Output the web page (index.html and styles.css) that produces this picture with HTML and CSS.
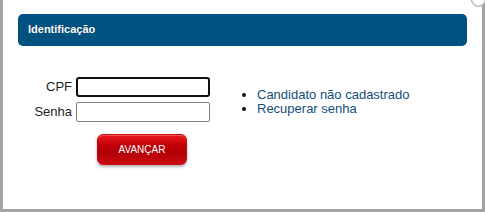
FILE: index.html
```html
<!DOCTYPE html>
<html lang="pt-BR">
<head>
<meta charset="utf-8">
<title>Identificação</title>
<link rel="stylesheet" href="styles.css">
</head>
<body>
<div class="dialog">
  <span class="close"></span>
  <div class="header">Identificação</div>
  <div class="content">
    <form class="login">
      <label class="lbl" for="cpf">CPF</label>
      <input class="field field-active" id="cpf" type="text">
      <label class="lbl" for="senha">Senha</label>
      <input class="field" id="senha" type="password">
      <span></span>
      <button class="btn" type="button">AVANÇAR</button>
    </form>
    <ul class="links">
      <li><a href="#">Candidato não cadastrado</a></li>
      <li><a href="#">Recuperar senha</a></li>
    </ul>
  </div>
</div>
</body>
</html>
```

FILE: styles.css
```css
html, body {
  margin: 0;
  padding: 0;
  background: #ffffff;
  overflow: hidden;
}

.dialog {
  position: relative;
  box-sizing: border-box;
  width: 485px;
  height: 212px;
  background: #ffffff;
  border-left: 3px solid #a4a4a4;
  border-right: 3px solid #a4a4a4;
  border-bottom: 3px solid #a4a4a4;
  padding-top: 14px;
  font-family: "Liberation Sans", Arial, sans-serif;
}

.close {
  position: absolute;
  top: -8px;
  right: -4px;
  width: 13px;
  height: 13px;
  border-radius: 50%;
  border: 1px solid #9c9c9c;
  background: radial-gradient(circle at 50% 40%, #ffffff 45%, #d8d8d8 100%);
}

.header {
  margin: 0 15px;
  height: 32px;
  line-height: 31px;
  padding-left: 10px;
  background: #005280;
  border-radius: 5px;
  color: #ffffff;
  font-size: 11px;
  font-weight: bold;
  text-shadow: 0 0 1px rgba(0, 0, 0, 0.4);
}

.content {
  display: flex;
  align-items: flex-start;
  margin-top: 31px;
  padding-left: 19px;
}

.login {
  display: grid;
  grid-template-columns: 50px 134px;
  column-gap: 4px;
  row-gap: 5px;
  margin: 0;
}

.lbl {
  text-align: right;
  font-size: 13px;
  line-height: 20px;
  color: #1e1e1e;
}

.field {
  box-sizing: border-box;
  width: 134px;
  height: 20px;
  margin: 0;
  padding: 1px 3px;
  border: 1px solid #808080;
  border-radius: 2px;
  background: #ffffff;
  font-family: "Liberation Sans", Arial, sans-serif;
  font-size: 13px;
}

.field-active {
  border: 2px solid #111111;
  border-radius: 3px;
  outline: none;
}

.btn {
  grid-column: 2;
  margin: 7px 0 0 21px;
  width: 90px;
  height: 31px;
  padding: 0;
  border: 1px solid #c80a10;
  border-radius: 6px;
  background: linear-gradient(#ec1a20 0%, #c20008 35%, #b00006 60%, #cc0a10 100%);
  box-shadow: inset 0 1px 0 rgba(255, 120, 120, 0.6), 0 2px 3px rgba(0, 0, 0, 0.3);
  color: #ffffff;
  font-family: "Liberation Sans", Arial, sans-serif;
  font-size: 10px;
  letter-spacing: 0;
}

.links {
  margin: 11px 0 0 0;
  padding-left: 47px;
  font-size: 13px;
  line-height: 14px;
  color: #111111;
}

.links a {
  color: #124f7c;
  text-decoration: none;
}
```
